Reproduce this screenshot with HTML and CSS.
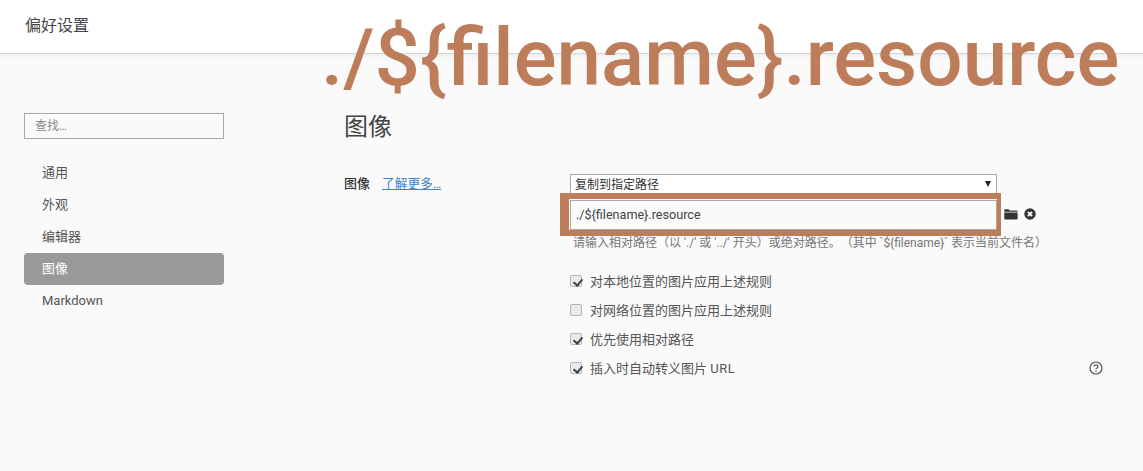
FILE: index.html
```html
<!DOCTYPE html>
<html lang="zh-CN">
<head>
<meta charset="utf-8">
<title>偏好设置</title>
<link rel="stylesheet" href="styles.css">
</head>
<body>
<header class="topbar">偏好设置</header>
<div class="layout">
  <aside class="sidebar">
    <div class="search">查找…</div>
    <nav class="nav">
      <div class="nav-item">通用</div>
      <div class="nav-item">外观</div>
      <div class="nav-item">编辑器</div>
      <div class="nav-item active">图像</div>
      <div class="nav-item">Markdown</div>
    </nav>
  </aside>
  <main class="main">
    <h1 class="title">图像</h1>
    <div class="setting">
      <div class="label-col"><b class="label">图像</b><a class="link">了解更多…</a></div>
      <div class="control-col">
        <div class="select">复制到指定路径<span class="caret"></span></div>
        <div class="path-row">
          <div class="path-input">./${filename}.resource</div>
          <svg class="icon-folder" viewBox="0 0 14 11"><path d="M0.3 1.2Q0.3 0.2 1.3 0.2H4.6L5.6 1.4H12.6Q13.6 1.4 13.6 2.4V2.8H0.3ZM0.3 3.5H13.6V9.6Q13.6 10.6 12.6 10.6H1.3Q0.3 10.6 0.3 9.6Z" fill="#333"/></svg>
          <svg class="icon-close" viewBox="0 0 12 12"><circle cx="6" cy="6" r="5.7" fill="#333"/><path d="M3.9 3.9L8.1 8.1M8.1 3.9L3.9 8.1" stroke="#fafafa" stroke-width="1.9"/></svg>
        </div>
        <p class="hint">请输入相对路径（以 './' 或 '../' 开头）或绝对路径。（其中 `${filename}` 表示当前文件名）</p>
        <div class="checks">
          <label class="check"><span class="box on"></span>对本地位置的图片应用上述规则</label>
          <label class="check"><span class="box"></span>对网络位置的图片应用上述规则</label>
          <label class="check"><span class="box on"></span>优先使用相对路径</label>
          <label class="check"><span class="box on"></span><span>插入时自动转义图片 <span class="url">URL</span></span>
            <svg class="icon-help" viewBox="0 0 14 14"><circle cx="7" cy="7" r="6" fill="none" stroke="#555" stroke-width="1.2"/><path d="M5 5.5Q5 3.8 7 3.8T9 5.5Q9 6.4 7.9 7T7 8.4" fill="none" stroke="#555" stroke-width="1.2"/><circle cx="7" cy="10.2" r="0.8" fill="#555"/></svg>
          </label>
        </div>
      </div>
    </div>
  </main>
</div>
<div class="anno-text">./${filename}.resource</div>
<div class="anno-box"></div>
</body>
</html>
```

FILE: styles.css
```css
* { box-sizing: border-box; }
html, body { margin: 0; height: 100%; }
body {
  position: relative;
  overflow: hidden;
  background: #fafafa;
  color: #555;
  font-family: "Roboto", "Noto Sans CJK SC", sans-serif;
  font-size: 13px;
  text-spacing-trim: space-all;
}
.topbar {
  height: 54px;
  padding: 16px 0 0 25px;
  background: #fff;
  border-bottom: 1px solid #d4d4d4;
  box-shadow: 0 2px 5px rgba(0,0,0,.06);
  font-size: 16px;
  line-height: 20px;
  color: #444;
}
.layout { display: flex; }
.sidebar { width: 200px; margin: 59px 0 0 24px; flex: none; }
.search {
  height: 26px;
  padding-left: 10px;
  border: 1px solid #a9a9a9;
  background: #fafafa;
  color: #888;
  font-size: 12px;
  line-height: 24px;
}
.nav { margin-top: 18px; }
.nav-item {
  height: 32px;
  padding-left: 18px;
  line-height: 31px;
  font-size: 13px;
  color: #555;
}
.nav-item.active { background: #999; color: #fff; border-radius: 4px; }
.main { flex: 1; margin: 0 0 0 120px; min-width: 0; }
.title {
  margin: 55px 0 0;
  font-size: 24px;
  line-height: 36px;
  font-weight: 400;
  color: #444;
}
.setting { display: flex; margin-top: 29px; }
.label-col { width: 226px; flex: none; line-height: 20px; }
.label { font-weight: 500; color: #333; font-size: 13px; }
.link { margin-left: 12px; color: #4183c4; text-decoration: underline; font-size: 12.7px; }
.control-col { flex: 1; min-width: 0; }
.select {
  position: relative;
  width: 427px;
  height: 20px;
  padding-left: 4px;
  background: #fff;
  border: 1px solid #a9a9a9;
  font-size: 12px;
  line-height: 20px;
  color: #333;
}
.caret {
  position: absolute;
  right: 5px;
  top: 6px;
  border-left: 3.5px solid transparent;
  border-right: 3.5px solid transparent;
  border-top: 6px solid #222;
}
.path-row { display: flex; align-items: center; margin-top: 6px; }
.path-input {
  width: 427px;
  height: 30px;
  padding-left: 5px;
  border: 1px solid #a9a9a9;
  font-size: 12.6px;
  line-height: 28px;
  color: #444;
}
.icon-folder { width: 14px; height: 11px; margin: 0 0 2px 7px; }
.icon-close { width: 12px; height: 12px; margin: 0 0 2px 6px; }
.hint {
  margin: 4px 0 0 3px;
  font-size: 12px;
  line-height: 18px;
  color: #777;
  white-space: nowrap;
}
.checks { margin-top: 14px; }
.check {
  position: relative;
  display: flex;
  align-items: center;
  height: 29px;
  font-size: 13px;
  color: #555;
}
.url { letter-spacing: 0.6px; }
.box {
  width: 12px;
  height: 12px;
  margin-right: 8px;
  border: 1px solid #b5b5b5;
  border-radius: 2px;
  background: #eaeaea;
  position: relative;
}
.box.on::after {
  content: "";
  position: absolute;
  left: 3.5px;
  top: 1px;
  width: 4px;
  height: 7px;
  border: solid #444;
  border-width: 0 2px 2px 0;
  transform: rotate(40deg);
}
.icon-help { position: absolute; left: 519px; top: 8px; width: 14px; height: 14px; }
.anno-text {
  position: absolute;
  left: 321px;
  top: 14px;
  font-family: "Roboto", sans-serif;
  font-size: 80px;
  font-weight: 500;
  line-height: 88px;
  color: #bd7c5a;
  white-space: nowrap;
}
.anno-box {
  position: absolute;
  left: 560px;
  top: 193px;
  width: 441px;
  height: 43px;
  border: solid #bd7c5a;
  border-width: 6px 4px 6px 9px;
}
```
